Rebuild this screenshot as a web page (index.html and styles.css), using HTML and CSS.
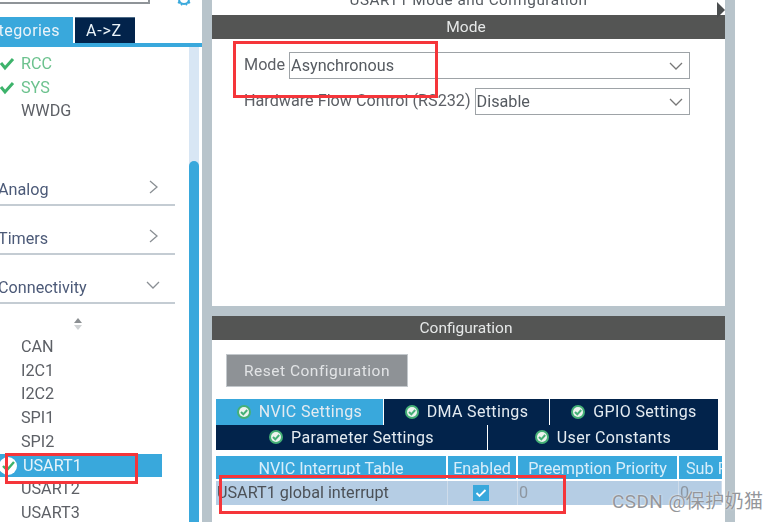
FILE: index.html
```html
<!DOCTYPE html>
<html lang="en">
<head>
<meta charset="utf-8">
<title>USART1 Mode and Configuration</title>
<link rel="stylesheet" href="styles.css">
</head>
<body>
<div class="app">
  <aside class="side">
    <div class="side-top">
      <div class="search"></div>
      <svg class="gear" width="16" height="8" viewBox="0 0 16 8"><circle cx="8" cy="-1" r="5" fill="none" stroke="#3aa9dc" stroke-width="2"/><path d="M2 2l2 1M14 2l-2 1M5 5l1-1M11 5l-1-1" stroke="#3aa9dc" stroke-width="2"/></svg>
    </div>
    <div class="side-tabs">
      <div class="stab stab-on"><span>Categories</span></div>
      <div class="stab stab-off">A-&gt;Z</div>
    </div>
    <div class="side-rule"></div>
    <div class="side-body">
      <div class="tree">
        <div class="item item-ok"><svg class="tick" width="16" height="14" viewBox="0 0 16 14"><path d="M1 6l4 5 8-9" fill="none" stroke="#3db36b" stroke-width="3"/></svg>RCC</div>
        <div class="item item-ok"><svg class="tick" width="16" height="14" viewBox="0 0 16 14"><path d="M1 6l4 5 8-9" fill="none" stroke="#3db36b" stroke-width="3"/></svg>SYS</div>
        <div class="item">WWDG</div>
        <div class="cat cat-first"><span class="cat-name">Analog</span><svg width="12" height="16" viewBox="0 0 12 16"><path d="M3 2l7 6-7 6" fill="none" stroke="#8a8f94" stroke-width="1.3"/></svg></div>
        <div class="cat"><span class="cat-name">Timers</span><svg width="12" height="16" viewBox="0 0 12 16"><path d="M3 2l7 6-7 6" fill="none" stroke="#8a8f94" stroke-width="1.3"/></svg></div>
        <div class="cat"><span class="cat-name">Connectivity</span><svg class="down" width="16" height="12" viewBox="0 0 16 12"><path d="M2 3l6 6 6-6" fill="none" stroke="#8a8f94" stroke-width="1.3"/></svg></div>
        <div class="sorter"><svg width="10" height="14" viewBox="0 0 10 14"><path d="M5 1l4 5H1z" fill="#8b8f92"/><path d="M5 13L1 8h8z" fill="#cfd2d4"/></svg></div>
        <div class="item">CAN</div>
        <div class="item">I2C1</div>
        <div class="item">I2C2</div>
        <div class="item">SPI1</div>
        <div class="item">SPI2</div>
        <div class="item item-sel"><svg class="badge" width="20" height="20" viewBox="0 0 20 20"><circle cx="10" cy="10" r="9" fill="#fff"/><path d="M5 10l4 4 7-8" fill="none" stroke="#3db36b" stroke-width="2.4"/></svg>USART1</div>
        <div class="item">USART2</div>
        <div class="item">USART3</div>
      </div>
      <div class="scroll"><div class="thumb"></div></div>
    </div>
  </aside>

  <main class="main">
    <section class="pane pane-mode">
      <div class="pane-title">USART1 Mode and Configuration</div>
      <div class="bar">Mode</div>
      <div class="form">
        <div class="row">
          <label>Mode</label>
          <div class="select"><span>Asynchronous</span><svg width="14" height="8" viewBox="0 0 14 8"><path d="M1 1l6 6 6-6" fill="none" stroke="#777" stroke-width="1.3"/></svg></div>
        </div>
        <div class="row">
          <label>Hardware Flow Control (RS232)</label>
          <div class="select"><span>Disable</span><svg width="14" height="8" viewBox="0 0 14 8"><path d="M1 1l6 6 6-6" fill="none" stroke="#777" stroke-width="1.3"/></svg></div>
        </div>
      </div>
    </section>
    <section class="pane pane-config">
      <div class="bar">Configuration</div>
      <button class="reset" type="button">Reset Configuration</button>
      <div class="tabs">
        <div class="tabrow tabrow-a">
          <div class="tab tab-on"><svg class="ok" width="14" height="14" viewBox="0 0 14 14"><circle cx="7" cy="7" r="7" fill="#45b077"/><circle cx="7" cy="7" r="5" fill="#eef3ef"/><path d="M4 7l2.300 2.300L10.200 5" fill="none" stroke="#45b077" stroke-width="2"/></svg>NVIC Settings</div>
          <div class="tab"><svg class="ok" width="14" height="14" viewBox="0 0 14 14"><circle cx="7" cy="7" r="7" fill="#45b077"/><circle cx="7" cy="7" r="5" fill="#eef3ef"/><path d="M4 7l2.300 2.300L10.200 5" fill="none" stroke="#45b077" stroke-width="2"/></svg>DMA Settings</div>
          <div class="tab"><svg class="ok" width="14" height="14" viewBox="0 0 14 14"><circle cx="7" cy="7" r="7" fill="#45b077"/><circle cx="7" cy="7" r="5" fill="#eef3ef"/><path d="M4 7l2.300 2.300L10.200 5" fill="none" stroke="#45b077" stroke-width="2"/></svg>GPIO Settings</div>
        </div>
        <div class="tabrow tabrow-b">
          <div class="tab"><svg class="ok" width="14" height="14" viewBox="0 0 14 14"><circle cx="7" cy="7" r="7" fill="#45b077"/><circle cx="7" cy="7" r="5" fill="#eef3ef"/><path d="M4 7l2.300 2.300L10.200 5" fill="none" stroke="#45b077" stroke-width="2"/></svg>Parameter Settings</div>
          <div class="tab"><svg class="ok" width="14" height="14" viewBox="0 0 14 14"><circle cx="7" cy="7" r="7" fill="#45b077"/><circle cx="7" cy="7" r="5" fill="#eef3ef"/><path d="M4 7l2.300 2.300L10.200 5" fill="none" stroke="#45b077" stroke-width="2"/></svg>User Constants</div>
        </div>
      </div>
      <div class="table">
        <div class="th">NVIC Interrupt Table</div>
        <div class="th">Enabled</div>
        <div class="th">Preemption Priority</div>
        <div class="th th-clip">Sub Priority</div>
        <div class="td td-name">USART1 global interrupt</div>
        <div class="td td-check"><svg width="16" height="16" viewBox="0 0 16 16"><rect width="16" height="16" fill="#39a8dc"/><path d="M3.500 8l3 3 6-6" fill="none" stroke="#fff" stroke-width="1.800"/></svg></div>
        <div class="td td-num">0</div>
        <div class="td td-num">0</div>
      </div>
    </section>
    <svg class="collapse" width="10" height="16" viewBox="0 0 10 16"><path d="M1 0l8 8-8 8z" fill="#4a4d4e"/></svg>
  </main>
  <div class="gutter"></div>
</div>
<div class="mark mark-mode"></div>
<div class="mark mark-usart"></div>
<div class="mark mark-row"></div>
<div class="watermark">CSDN @保护奶猫</div>
</body>
</html>
```

FILE: styles.css
```css
* { box-sizing: border-box; }
html, body { margin: 0; padding: 0; background: #fff; }
body { position: relative; width: 778px; height: 522px; overflow: hidden; font-family: Roboto, "Noto Sans CJK SC", sans-serif; font-size: 16.200px; color: #555a60; }
.app { display: flex; width: 778px; height: 522px; filter: blur(.35px); }

.side { width: 202px; flex: none; display: flex; flex-direction: column; background: #fff; }
.side-top { height: 17px; display: flex; position: relative; }
.search { width: 150px; height: 4px; border: 1px solid #8f9498; border-width: 0 2px 2px 0; }
.gear { margin-left: 26px; }
.side-tabs { height: 26px; display: flex; gap: 2px; color: #eaf3f9; font-size: 16px; letter-spacing: .45px; }
.stab { display: flex; align-items: center; }
.stab-on { width: 73px; background: #39a8dc; overflow: hidden; justify-content: flex-end; padding-right: 13px; white-space: nowrap; }
.stab-off { width: 60px; background: #02234b; justify-content: center; border-top: 1px solid #4c6a86; padding-right: 2px; letter-spacing: .8px; }
.side-rule { height: 4px; background: #39a8dc; }
.side-body { flex: 1; display: flex; min-height: 0; }
.tree { width: 189px; padding-top: 5px; overflow: hidden; }
.item { height: 23.700px; line-height: 23.700px; padding-left: 21px; position: relative; color: #5d6066; width: 162px; }
.item-ok { color: #6cc28e; }
.tick { position: absolute; left: 0; top: 5px; }
.item-sel { background: #39a8dc; color: #e6f3fa; padding-left: 23px; }
.badge { position: absolute; left: -2px; top: 2px; }
.cat { width: 175px; height: 49px; padding-bottom: 5px; border-bottom: 2px solid #c4ccd3; display: flex; align-items: flex-end; justify-content: space-between; padding-right: 16px; color: #4c5a78; line-height: 18px; }
.cat-name { margin-left: -2px; }
.cat svg { margin-bottom: 4px; }
.cat .down { margin-right: -2px; margin-bottom: 6px; }
.cat-first { height: 58px; margin-top: 25px; }
.sorter { height: 31px; width: 156px; display: flex; justify-content: center; align-items: center; padding-top: 8px; }
.scroll { width: 10px; background: #d8e6f4; padding-top: 114px; }
.thumb { height: 100%; background: #39a8dc; border-radius: 5px 5px 0 0; }

.main { width: 533px; flex: none; background: #b8c4cb; padding: 0 10px; position: relative; display: flex; flex-direction: column; gap: 10px; }
.pane { background: #fff; }
.pane-mode { height: 306px; }
.pane-config { flex: 1; min-height: 0; }
.pane-title { height: 15px; line-height: 0; text-align: center; overflow: hidden; color: #555a60; font-size: 15.300px; letter-spacing: .5px; }
.bar { height: 24px; line-height: 24px; background: #545554; color: #e6e8e8; text-align: center; font-size: 15.500px; padding-right: 5px; }
.form { padding: 13px 35px 0 32px; display: flex; flex-direction: column; gap: 9px; }
.row { display: flex; align-items: center; gap: 4px; height: 27px; }
.row label { white-space: nowrap; color: #5d6066; line-height: 24px; padding-bottom: 1px; }
.select { flex: 1; height: 100%; border: 1.500px solid #9ea3a7; display: flex; align-items: center; justify-content: space-between; padding: 0 6px 0 1px; color: #555a60; }
.select span { padding-bottom: 1px; }

.reset { display: block; margin: 14px 0 12px 14px; width: 182px; height: 33px; border: 1px solid #c3c8cc; background: #8e9296; color: #e2e4e6; font: inherit; font-size: 15.500px; letter-spacing: .5px; }
.tabs { margin: 0 7px 0 4px; color: #e4ebf1; font-size: 16px; letter-spacing: .35px; }
.tabrow { display: grid; height: 25.500px; gap: 1px; }
.tabrow-a { grid-template-columns: 167px 165px 168px; }
.tabrow-b { grid-template-columns: 271px 230px; }
.tab { background: #02234b; display: flex; align-items: center; justify-content: center; gap: 8px; white-space: nowrap; }
.tab-on { background: #39a8dc; }
.ok { flex: none; }
.table { margin: 6px 3px 0 4px; display: grid; grid-template-columns: 232px 70px 161px 43px; grid-template-rows: 25px 24px; color: #555a60; }
.th { background: #39a8dc; color: #d8eefa; text-align: center; line-height: 25px; border-right: 2px solid #fff; border-bottom: 2px solid #fff; overflow: hidden; white-space: nowrap; }
.th-clip { text-align: left; padding-left: 7px; border-right: 0; }
.td { background: #b5cde4; line-height: 24px; border-right: 1px solid #cfdcea; white-space: nowrap; }
.td-name { padding-left: 1px; color: #4c5157; }
.td-check { display: flex; align-items: center; justify-content: center; padding-right: 4px; }
.td-num { padding-left: 1px; color: #8d96a0; }
.collapse { position: absolute; left: 514px; top: 2px; }
.gutter { flex: 1; background: #fff; }

.mark { position: absolute; border: 3px solid #f5353a; }
.mark-mode { left: 233px; top: 41px; width: 205px; height: 57px; }
.mark-usart { left: 5px; top: 453px; width: 133px; height: 31px; }
.mark-row { left: 219px; top: 475px; width: 347px; height: 39px; }
.watermark { position: absolute; left: 612px; top: 490px; font-size: 19px; line-height: 24px; color: #94969a; letter-spacing: .4px; white-space: nowrap; text-shadow: 0 0 2px #fff; }
```
